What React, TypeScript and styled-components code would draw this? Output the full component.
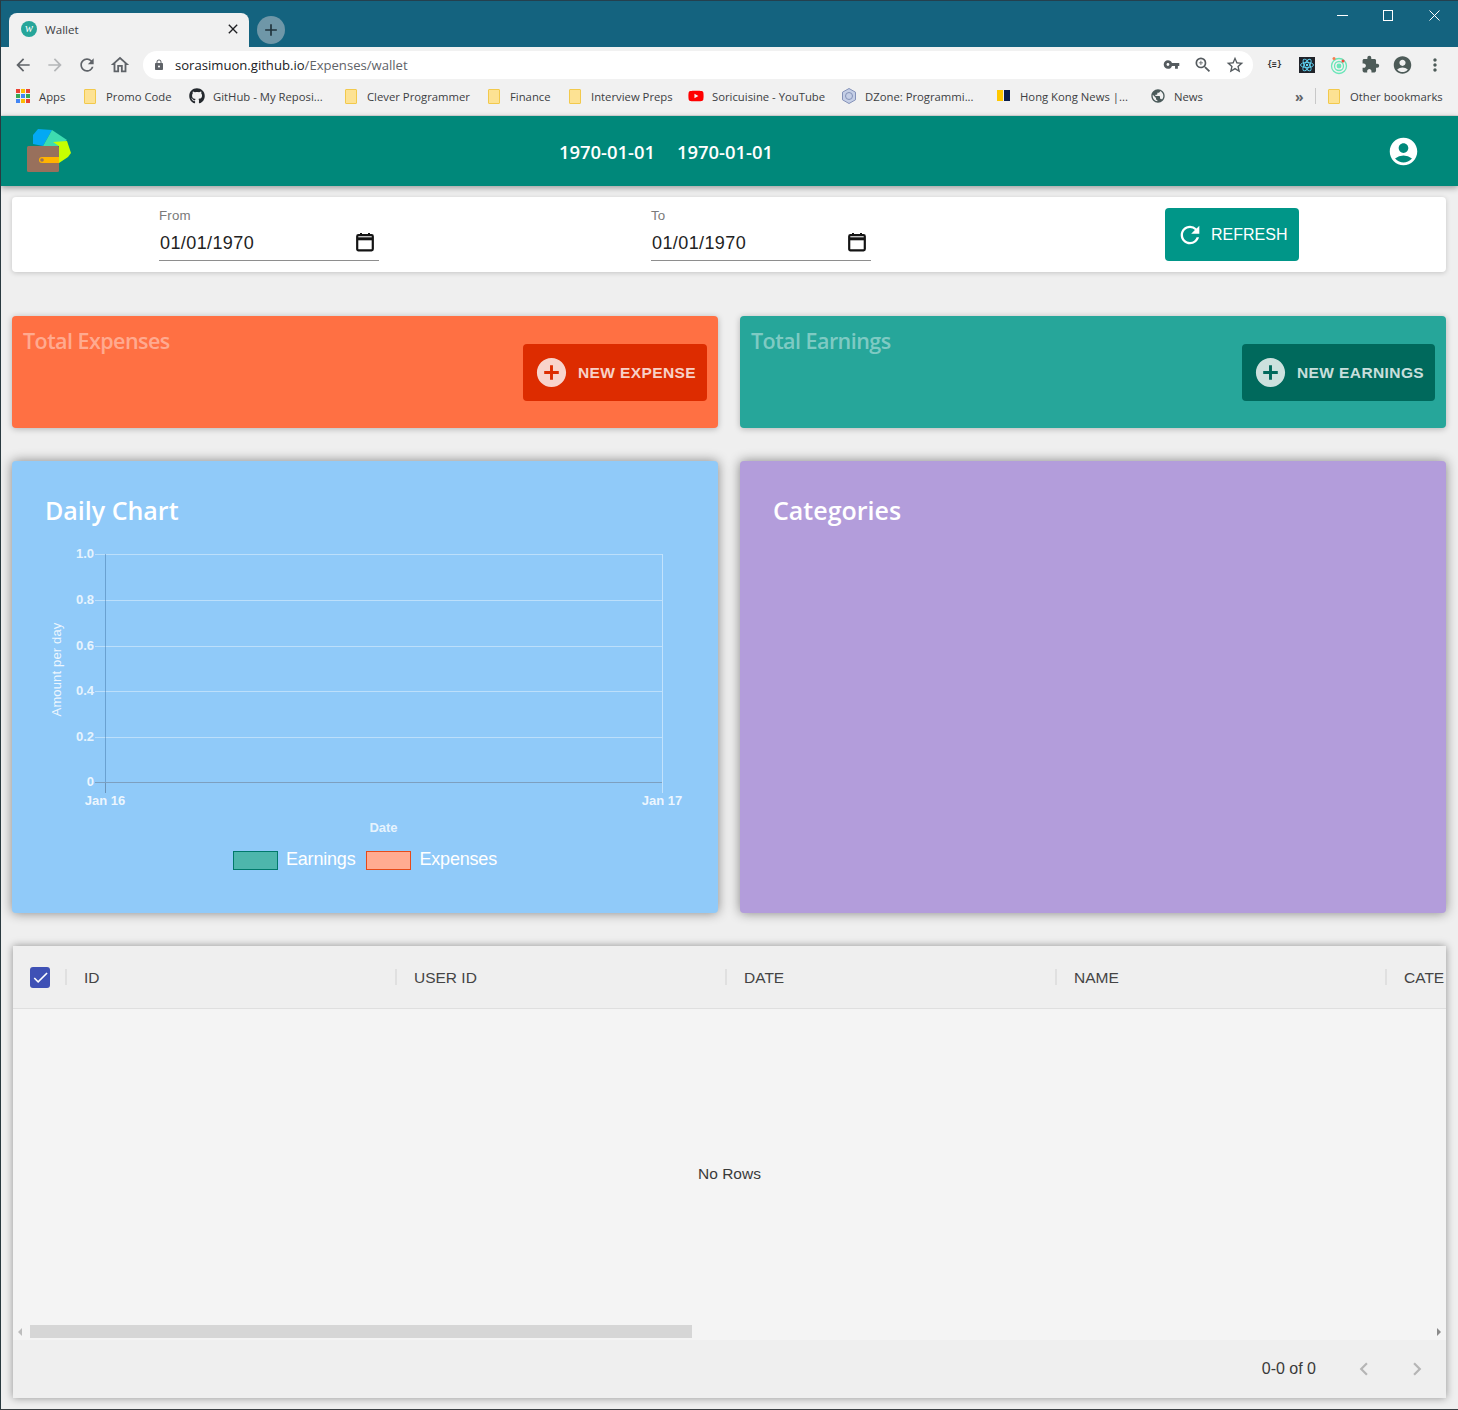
import styled, { createGlobalStyle } from "styled-components";
import { FaGithub, FaYoutube } from "react-icons/fa";
import {
  MdAccountCircle,
  MdAddCircle,
  MdArrowBack,
  MdArrowForward,
  MdCheck,
  MdChevronLeft,
  MdChevronRight,
  MdClose,
  MdExtension,
  MdLock,
  MdMoreVert,
  MdOutlineHome,
  MdPublic,
  MdRefresh,
  MdStarBorder,
  MdVpnKey,
  MdZoomIn,
  MdAdd,
} from "react-icons/md";

const GlobalStyle = createGlobalStyle`
  html, body {
    margin: 0;
    padding: 0;
    background: #efefef;
  }
  * {
    box-sizing: border-box;
  }
`;

const Window = styled.div`
  width: 1458px;
  height: 1410px;
  overflow: hidden;
  display: flex;
  flex-direction: column;
  background: #efefef;
  border-top: 1px solid #24404e;
  border-bottom: 1px solid #3a3f42;
  border-left: 1px solid #2a3a40;
  font-family: "Liberation Sans", sans-serif;
`;

/* browser chrome */
const TabStrip = styled.div`
  height: 46px;
  flex-shrink: 0;
  background: #14637f;
  display: flex;
  align-items: flex-end;
  padding-left: 8px;
  position: relative;
`;

const Tab = styled.div`
  width: 240px;
  height: 34px;
  background: #f1f1f1;
  border-radius: 8px 8px 0 0;
  display: flex;
  align-items: center;
  padding: 0 8px 2px 12px;
  font: 11.6px "Open Sans", sans-serif;
  color: #3c4043;
`;

const Favicon = styled.span`
  width: 16px;
  height: 16px;
  border-radius: 50%;
  background: #26a69a;
  color: #fff;
  font: italic 12px/15px "Liberation Serif", serif;
  text-align: center;
  margin-right: 8px;
`;

const TabTitle = styled.span`
  flex: 1;
`;

const NewTab = styled.div`
  width: 28px;
  height: 28px;
  border-radius: 50%;
  background: #6f97a8;
  color: #20333b;
  font-size: 20px;
  display: flex;
  align-items: center;
  justify-content: center;
  margin: 0 0 3px 8px;
`;

const WindowControls = styled.div`
  position: absolute;
  top: 5px;
  right: 1px;
  display: flex;
  color: #fff;
`;

const WindowControl = styled.div`
  width: 46px;
  height: 18px;
  display: flex;
  align-items: center;
  justify-content: center;
`;

const Toolbar = styled.div`
  height: 37px;
  flex-shrink: 0;
  background: #f1f1f1;
  display: flex;
  align-items: center;
  padding: 0 0 2px 12px;
  color: #5f6368;
`;

const NavButton = styled.span<{ $dim?: boolean; $gap?: number }>`
  display: flex;
  font-size: 20px;
  margin-right: ${({ $gap }) => $gap ?? 12}px;
  color: ${({ $dim }) => ($dim ? "#b4b6b8" : "#5f6368")};
`;

const AddressBar = styled.div`
  width: 1110px;
  height: 28px;
  border-radius: 14px;
  background: #fff;
  display: flex;
  align-items: center;
  padding: 0 2px 0 10px;
  font: 13.1px "Open Sans", sans-serif;
  color: #5f6368;
`;

const Host = styled.span`
  color: #202124;
  margin-left: 10px;
`;

const AddressIcons = styled.div`
  margin-left: auto;
  display: flex;
  align-items: center;
  color: #555b5f;
`;

const AddressIcon = styled.span`
  width: 32px;
  display: flex;
  justify-content: center;
  font-size: 19px;
`;

const ExtensionTray = styled.div`
  display: flex;
  align-items: center;
  margin-left: 11px;
  gap: 11px;
  color: #4d5b58;
`;

const ExtSlot = styled.span<{ $size?: number }>`
  width: 21px;
  display: flex;
  justify-content: center;
  font-size: ${({ $size }) => $size ?? 20}px;
`;

const CurlyExt = styled.span`
  font: bold 8px "DejaVu Sans Mono", monospace;
  color: #333;
`;

const BookmarksBar = styled.div`
  height: 32px;
  flex-shrink: 0;
  background: #f1f1f1;
  display: flex;
  align-items: center;
  padding: 0 0 7px 14px;
  border-bottom: 1px solid #dcdcdc;
  font: 11.3px "Open Sans", sans-serif;
  color: #3c4043;
  white-space: nowrap;
`;

const Bookmark = styled.div<{ $w: number }>`
  width: ${({ $w }) => $w}px;
  flex-shrink: 0;
  display: flex;
  align-items: center;
  gap: 8px;
`;

const BookmarkIcon = styled.span<{ $color?: string }>`
  width: 16px;
  height: 16px;
  font-size: 16px;
  display: flex;
  align-items: center;
  justify-content: center;
  color: ${({ $color }) => $color ?? "#24292e"};
`;

const Folder = styled.span`
  width: 12px;
  height: 15px;
  margin: 0 2px 0 1px;
  display: block;
  background: #fde293;
  border: 1px solid #f2c94c;
  border-radius: 1px;
`;

const AppsDots = styled.span`
  display: grid;
  grid-template-columns: repeat(3, 4px);
  grid-auto-rows: 4px;
  gap: 1px;
`;

const AppsDot = styled.i<{ $c: string }>`
  background: ${({ $c }) => $c};
`;

const Chevrons = styled.span`
  width: 20px;
  font-size: 14px;
  font-weight: 700;
  color: #5f6368;
`;

const BarDivider = styled.span`
  width: 1px;
  height: 16px;
  background: #c8c8c8;
  margin-right: 11px;
`;

/* app */
const AppBar = styled.header`
  height: 70px;
  flex-shrink: 0;
  background: #00887a;
  color: #fff;
  display: flex;
  align-items: center;
  padding: 0 38px 0 25px;
  box-shadow: 0 2px 6px rgba(0, 0, 0, 0.35);
  position: relative;
  z-index: 2;
`;

const DateRange = styled.div`
  flex: 1;
  display: flex;
  justify-content: center;
  gap: 22px;
  font: 600 18.4px "Open Sans", sans-serif;
  padding: 1px 127px 0 0;
`;

const AccountButton = styled.span`
  display: flex;
  font-size: 33px;
`;

const Content = styled.main`
  flex: 1;
  padding: 11px 12px 0 11px;
  display: flex;
  flex-direction: column;
`;

const FilterCard = styled.section`
  height: 75px;
  background: #fff;
  border-radius: 4px;
  box-shadow: 0 1px 5px rgba(0, 0, 0, 0.18);
  display: grid;
  grid-template-columns: 492px 514px 134px;
  padding: 11px 0 0 147px;
  margin-bottom: 44px;
`;

const DateField = styled.label`
  width: 220px;
  height: 53px;
  display: flex;
  flex-direction: column;
  border-bottom: 1px solid #8e8e8e;
`;

const FieldLabel = styled.span`
  font-size: 13.3px;
  color: #7a7a7a;
  line-height: 15px;
  margin-bottom: 7px;
  letter-spacing: 0.2px;
`;

const FieldValue = styled.span`
  display: flex;
  align-items: center;
  justify-content: space-between;
  padding: 0 4px 0 1px;
  font-size: 18px;
  letter-spacing: 0.4px;
  line-height: 26px;
  color: #222;
`;

const CalendarSvg = styled.svg`
  margin-bottom: 2px;
`;

const RefreshButton = styled.button`
  width: 134px;
  height: 53px;
  border: 0;
  border-radius: 4px;
  background: #009688;
  color: #fff;
  display: flex;
  align-items: center;
  gap: 7px;
  padding: 0 0 0 11px;
  font: 400 16px "Liberation Sans", sans-serif;
  white-space: nowrap;
`;

const Row = styled.div<{ $h: number; $mb: number }>`
  display: grid;
  grid-template-columns: 706px 706px;
  gap: 22px;
  height: ${({ $h }) => $h}px;
  margin-bottom: ${({ $mb }) => $mb}px;
`;

const SummaryCard = styled.section<{ $bg: string }>`
  background: ${({ $bg }) => $bg};
  border-radius: 4px;
  box-shadow: 0 1px 6px rgba(0, 0, 0, 0.25);
  padding: 11px 11px 0;
  display: flex;
  flex-direction: column;
`;

const SummaryTitle = styled.h2`
  margin: 0;
  font: 600 21.5px/28px "Open Sans", sans-serif;
  letter-spacing: -0.55px;
  color: rgba(255, 255, 255, 0.42);
`;

const NewButton = styled.button<{ $bg: string; $w: number }>`
  align-self: flex-end;
  width: ${({ $w }) => $w}px;
  height: 57px;
  margin-top: -11px;
  border: 0;
  border-radius: 4px;
  background: ${({ $bg }) => $bg};
  color: rgba(255, 255, 255, 0.8);
  display: flex;
  align-items: center;
  gap: 9px;
  padding: 0 0 0 11px;
  font: 700 15.5px "Liberation Sans", sans-serif;
  letter-spacing: 0.4px;
  white-space: nowrap;
`;

const PanelCard = styled.section<{ $bg: string }>`
  background: ${({ $bg }) => $bg};
  border-radius: 4px;
  box-shadow: 0 0 12px rgba(0, 0, 0, 0.45);
  padding: 32px 33px 0 34px;
`;

const PanelTitle = styled.h2`
  margin: 0 0 13px -1px;
  font: 600 25px/34px "Open Sans", sans-serif;
  color: #fff;
`;

const ChartSvg = styled.svg`
  display: block;
  overflow: visible;
`;

const TickText = styled.text<{ $o?: number }>`
  font: bold 13px "Liberation Sans", sans-serif;
  fill: rgba(255, 255, 255, ${({ $o }) => $o ?? 0.85});
`;

const AxisLabel = styled.text`
  font: 13px "Liberation Sans", sans-serif;
  letter-spacing: 0.15px;
  fill: rgba(255, 255, 255, 0.85);
`;

const LegendText = styled.text`
  font: 18px "Liberation Sans", sans-serif;
  fill: #fff;
  letter-spacing: -0.2px;
`;

const TableCard = styled.section`
  height: 452px;
  margin-left: 1px;
  display: flex;
  flex-direction: column;
  background: #f4f4f4;
  box-shadow: 0 0 8px rgba(0, 0, 0, 0.4);
  color: #3a3a3a;
`;

const TableHead = styled.div`
  height: 63px;
  flex-shrink: 0;
  background: #efefef;
  border-bottom: 1px solid #dfdfdf;
  display: flex;
  align-items: center;
  padding: 0 2px 0 17px;
`;

const HeadColumns = styled.div`
  flex: 1;
  min-width: 0;
  display: flex;
  overflow: hidden;
`;

const CheckBox = styled.span`
  width: 20px;
  height: 21px;
  flex-shrink: 0;
  border-radius: 3px;
  background: #3f51b5;
  color: #fff;
  font-size: 19px;
  display: flex;
  align-items: center;
  justify-content: center;
  margin-right: 15px;
`;

const ColumnHead = styled.div`
  width: 330px;
  flex-shrink: 0;
  height: 16px;
  line-height: 18px;
  border-left: 2px solid #e0e0e0;
  padding-left: 17px;
  font-size: 15.5px;
  color: #444;
  white-space: nowrap;
`;

const TableBody = styled.div`
  flex: 1;
  position: relative;
  display: flex;
  align-items: center;
  justify-content: center;
  padding-bottom: 2px;
  font-size: 15.5px;
`;

const ScrollBar = styled.div`
  position: absolute;
  left: 3px;
  right: 3px;
  bottom: 2px;
  height: 13px;
  display: flex;
  align-items: center;
  justify-content: space-between;
  padding: 0 2px;
`;

const ScrollThumb = styled.div`
  position: absolute;
  left: 14px;
  top: 0;
  width: 662px;
  height: 13px;
  background: #d6d6d6;
`;

const ScrollArrow = styled.i<{ $dir: "left" | "right" }>`
  width: 0;
  height: 0;
  border-top: 4px solid transparent;
  border-bottom: 4px solid transparent;
  ${({ $dir }) =>
    $dir === "left" ? "border-right: 4px solid #bdbdbd;" : "border-left: 4px solid #8a8a8a;"}
`;

const TableFooter = styled.div`
  height: 58px;
  flex-shrink: 0;
  background: #efefef;
  display: flex;
  align-items: center;
  justify-content: flex-end;
  padding-right: 16px;
  font-size: 16px;
`;

const PageCount = styled.span`
  margin-right: 35px;
`;

const PageButton = styled.span<{ $last?: boolean }>`
  display: flex;
  font-size: 26px;
  color: #b5b5b5;
  margin-left: ${({ $last }) => ($last ? 27 : 0)}px;
`;

const yTicks = [
  { label: "1.0", y: 14 },
  { label: "0.8", y: 60 },
  { label: "0.6", y: 106 },
  { label: "0.4", y: 151 },
  { label: "0.2", y: 197 },
];

const columns = ["ID", "USER ID", "DATE", "NAME", "CATEGORY"];

const appsColors = ["#ea4335", "#fbbc04", "#ea4335", "#34a853", "#4285f4", "#34a853", "#4285f4", "#fbbc04", "#ea4335"];

function WalletLogo() {
  return (
    <svg width="46" height="46" viewBox="0 0 46 46">
      <polygon points="7,7 12,1 26,2 17,18 7,16" fill="#03a9f4" />
      <polygon points="26,2 41,12 33,18 17,18" fill="#3ddcb0" />
      <polygon points="27,14 41,13 45,25 42,29 33,35 33,18" fill="#c6ff00" />
      <rect x="1" y="18" width="32" height="26" rx="1.5" fill="#98705c" />
      <path d="M33 29H16a3 3 0 0 0 0 6h17z" fill="#ffb300" />
      <circle cx="16" cy="32" r="1.8" fill="#98705c" />
    </svg>
  );
}

function CalendarIcon() {
  return (
    <CalendarSvg width="20" height="20" viewBox="0 0 20 20" fill="none" stroke="#141414">
      <rect x="2.2" y="3.2" width="15.6" height="15.1" rx="1.2" strokeWidth="2.2" />
      <path d="M2 6.8h16" strokeWidth="3" />
      <path d="M6 1v3M14 1v3" strokeWidth="2" />
    </CalendarSvg>
  );
}

function DailyChart() {
  // svg origin sits at page x 46, y 540
  return (
    <ChartSvg width="640" height="340" viewBox="0 0 640 340">
      {yTicks.map((t) => (
        <g key={t.label}>
          <line x1="49" x2="616" y1={t.y + 0.5} y2={t.y + 0.5} stroke="rgba(255,255,255,0.4)" />
          <TickText x="48" y={t.y + 4} textAnchor="end" $o={0.8}>
            {t.label}
          </TickText>
        </g>
      ))}
      <line x1="616.5" x2="616.5" y1="14" y2="253" stroke="rgba(255,255,255,0.45)" />
      <line x1="59.5" x2="59.5" y1="14" y2="242" stroke="rgba(60,110,160,0.45)" />
      <line x1="59.5" x2="59.5" y1="242" y2="253" stroke="#6a94ba" />
      <line x1="49" x2="616" y1="242.5" y2="242.5" stroke="#7d9fbf" />
      <TickText x="48" y="246" textAnchor="end" $o={0.85}>
        0
      </TickText>
      <TickText x="59" y="265" textAnchor="middle">
        Jan 16
      </TickText>
      <TickText x="616" y="265" textAnchor="middle">
        Jan 17
      </TickText>
      <AxisLabel x="0" y="0" textAnchor="middle" transform="translate(15 129.5) rotate(-90)">
        Amount per day
      </AxisLabel>
      <TickText x="337.5" y="292" textAnchor="middle" $o={0.8}>
        Date
      </TickText>
      <rect x="187.5" y="311.5" width="44" height="18" fill="#4db6ac" stroke="#00796b" />
      <LegendText x="240" y="325">
        Earnings
      </LegendText>
      <rect x="320.5" y="311.5" width="44" height="18" fill="#ffab91" stroke="#e64a19" />
      <LegendText x="373.5" y="325">
        Expenses
      </LegendText>
    </ChartSvg>
  );
}

export default function App() {
  return (
    <Window>
      <GlobalStyle />
      <TabStrip>
        <Tab>
          <Favicon>w</Favicon>
          <TabTitle>Wallet</TabTitle>
          <MdClose size={16} color="#202124" />
        </Tab>
        <NewTab>
          <MdAdd />
        </NewTab>
        <WindowControls>
          <WindowControl>
            <svg width="11" height="11" viewBox="0 0 11 11" stroke="#fff"><path d="M0 5.5h11" /></svg>
          </WindowControl>
          <WindowControl>
            <svg width="11" height="11" viewBox="0 0 11 11" fill="none" stroke="#fff"><rect x="0.5" y="0.5" width="9" height="10" /></svg>
          </WindowControl>
          <WindowControl>
            <svg width="11" height="11" viewBox="0 0 11 11" stroke="#fff"><path d="M0.5 0.5l10 10M10.5 0.5l-10 10" /></svg>
          </WindowControl>
        </WindowControls>
      </TabStrip>

      <Toolbar>
        <NavButton><MdArrowBack /></NavButton>
        <NavButton $dim><MdArrowForward /></NavButton>
        <NavButton><MdRefresh /></NavButton>
        <NavButton $gap={12}><MdOutlineHome size={22} /></NavButton>
        <AddressBar>
          <MdLock size={12} color="#5f6368" />
          <Host>sorasimuon.github.io</Host>/Expenses/wallet
          <AddressIcons>
            <AddressIcon><MdVpnKey size={17} /></AddressIcon>
            <AddressIcon><MdZoomIn size={20} /></AddressIcon>
            <AddressIcon><MdStarBorder size={20} /></AddressIcon>
          </AddressIcons>
        </AddressBar>
        <ExtensionTray>
          <ExtSlot><CurlyExt>{"{≡}"}</CurlyExt></ExtSlot>
          <ExtSlot>
            <svg width="16" height="16" viewBox="0 0 16 16">
              <rect width="16" height="16" fill="#20232a" />
              <g fill="none" stroke="#61dafb" strokeWidth="0.9">
                <ellipse cx="8" cy="8" rx="6.5" ry="2.6" />
                <ellipse cx="8" cy="8" rx="6.5" ry="2.6" transform="rotate(60 8 8)" />
                <ellipse cx="8" cy="8" rx="6.5" ry="2.6" transform="rotate(120 8 8)" />
              </g>
              <circle cx="8" cy="8" r="1.2" fill="#61dafb" />
            </svg>
          </ExtSlot>
          <ExtSlot>
            <svg width="18" height="20" viewBox="0 0 18 20" fill="none" stroke="#69e6b8" strokeWidth="1.3">
              <circle cx="9" cy="11" r="7.5" />
              <circle cx="9" cy="11" r="4.5" />
              <circle cx="9" cy="11" r="1.8" fill="#69e6b8" />
              <circle cx="4" cy="3.5" r="1.5" fill="#f57c4d" stroke="none" />
              <circle cx="13" cy="6" r="1.5" fill="#ef4b3a" stroke="none" />
            </svg>
          </ExtSlot>
          <ExtSlot $size={19}><MdExtension /></ExtSlot>
          <ExtSlot $size={26}><MdAccountCircle /></ExtSlot>
          <ExtSlot><MdMoreVert /></ExtSlot>
        </ExtensionTray>
      </Toolbar>

      <BookmarksBar>
        <Bookmark $w={68}>
          <BookmarkIcon>
            <AppsDots>
              {appsColors.map((c, i) => (
                <AppsDot key={i} $c={c} />
              ))}
            </AppsDots>
          </BookmarkIcon>
          Apps
        </Bookmark>
        <Bookmark $w={106}><Folder />Promo Code</Bookmark>
        <Bookmark $w={155}>
          <BookmarkIcon><FaGithub /></BookmarkIcon>
          GitHub - My Reposi...
        </Bookmark>
        <Bookmark $w={143}><Folder />Clever Programmer</Bookmark>
        <Bookmark $w={81}><Folder />Finance</Bookmark>
        <Bookmark $w={120}><Folder />Interview Preps</Bookmark>
        <Bookmark $w={153}>
          <BookmarkIcon $color="#f00"><FaYoutube /></BookmarkIcon>
          Soricuisine - YouTube
        </Bookmark>
        <Bookmark $w={155}>
          <BookmarkIcon>
            <svg width="16" height="16" viewBox="0 0 16 16" fill="#c5cfe6" stroke="#8492b8">
              <polygon points="8,0.5 14.5,4.2 14.5,11.8 8,15.5 1.5,11.8 1.5,4.2" />
              <circle cx="8" cy="8" r="3.5" fill="none" />
            </svg>
          </BookmarkIcon>
          DZone: Programmi...
        </Bookmark>
        <Bookmark $w={154}>
          <BookmarkIcon>
            <svg width="16" height="16" viewBox="0 0 16 16">
              <rect x="1" y="2" width="6" height="11" fill="#ffc800" />
              <rect x="8" y="2" width="6" height="11" fill="#0b1f4d" />
            </svg>
          </BookmarkIcon>
          Hong Kong News |...
        </Bookmark>
        <Bookmark $w={145}>
          <BookmarkIcon $color="#4a5a5a"><MdPublic size={18} /></BookmarkIcon>
          News
        </Bookmark>
        <Chevrons>»</Chevrons>
        <BarDivider />
        <Bookmark $w={120}><Folder />Other bookmarks</Bookmark>
      </BookmarksBar>

      <AppBar>
        <WalletLogo />
        <DateRange>
          <span>1970-01-01</span>
          <span>1970-01-01</span>
        </DateRange>
        <AccountButton><MdAccountCircle /></AccountButton>
      </AppBar>

      <Content>
        <FilterCard>
          <DateField>
            <FieldLabel>From</FieldLabel>
            <FieldValue>01/01/1970<CalendarIcon /></FieldValue>
          </DateField>
          <DateField>
            <FieldLabel>To</FieldLabel>
            <FieldValue>01/01/1970<CalendarIcon /></FieldValue>
          </DateField>
          <RefreshButton>
            <MdRefresh size={28} />
            REFRESH
          </RefreshButton>
        </FilterCard>

        <Row $h={112} $mb={33}>
          <SummaryCard $bg="#ff7043">
            <SummaryTitle>Total Expenses</SummaryTitle>
            <NewButton $bg="#dd2c00" $w={184}>
              <MdAddCircle size={35} />
              NEW EXPENSE
            </NewButton>
          </SummaryCard>
          <SummaryCard $bg="#26a69a">
            <SummaryTitle>Total Earnings</SummaryTitle>
            <NewButton $bg="#00695c" $w={193}>
              <MdAddCircle size={35} />
              NEW EARNINGS
            </NewButton>
          </SummaryCard>
        </Row>

        <Row $h={452} $mb={33}>
          <PanelCard $bg="#90caf9">
            <PanelTitle>Daily Chart</PanelTitle>
            <DailyChart />
          </PanelCard>
          <PanelCard $bg="#b39ddb">
            <PanelTitle>Categories</PanelTitle>
          </PanelCard>
        </Row>

        <TableCard>
          <TableHead>
            <CheckBox><MdCheck /></CheckBox>
            <HeadColumns>
              {columns.map((c) => (
                <ColumnHead key={c}>{c}</ColumnHead>
              ))}
            </HeadColumns>
          </TableHead>
          <TableBody>
            No Rows
            <ScrollBar>
              <ScrollArrow $dir="left" />
              <ScrollThumb />
              <ScrollArrow $dir="right" />
            </ScrollBar>
          </TableBody>
          <TableFooter>
            <PageCount>0-0 of 0</PageCount>
            <PageButton><MdChevronLeft /></PageButton>
            <PageButton $last><MdChevronRight /></PageButton>
          </TableFooter>
        </TableCard>
      </Content>
    </Window>
  );
}
